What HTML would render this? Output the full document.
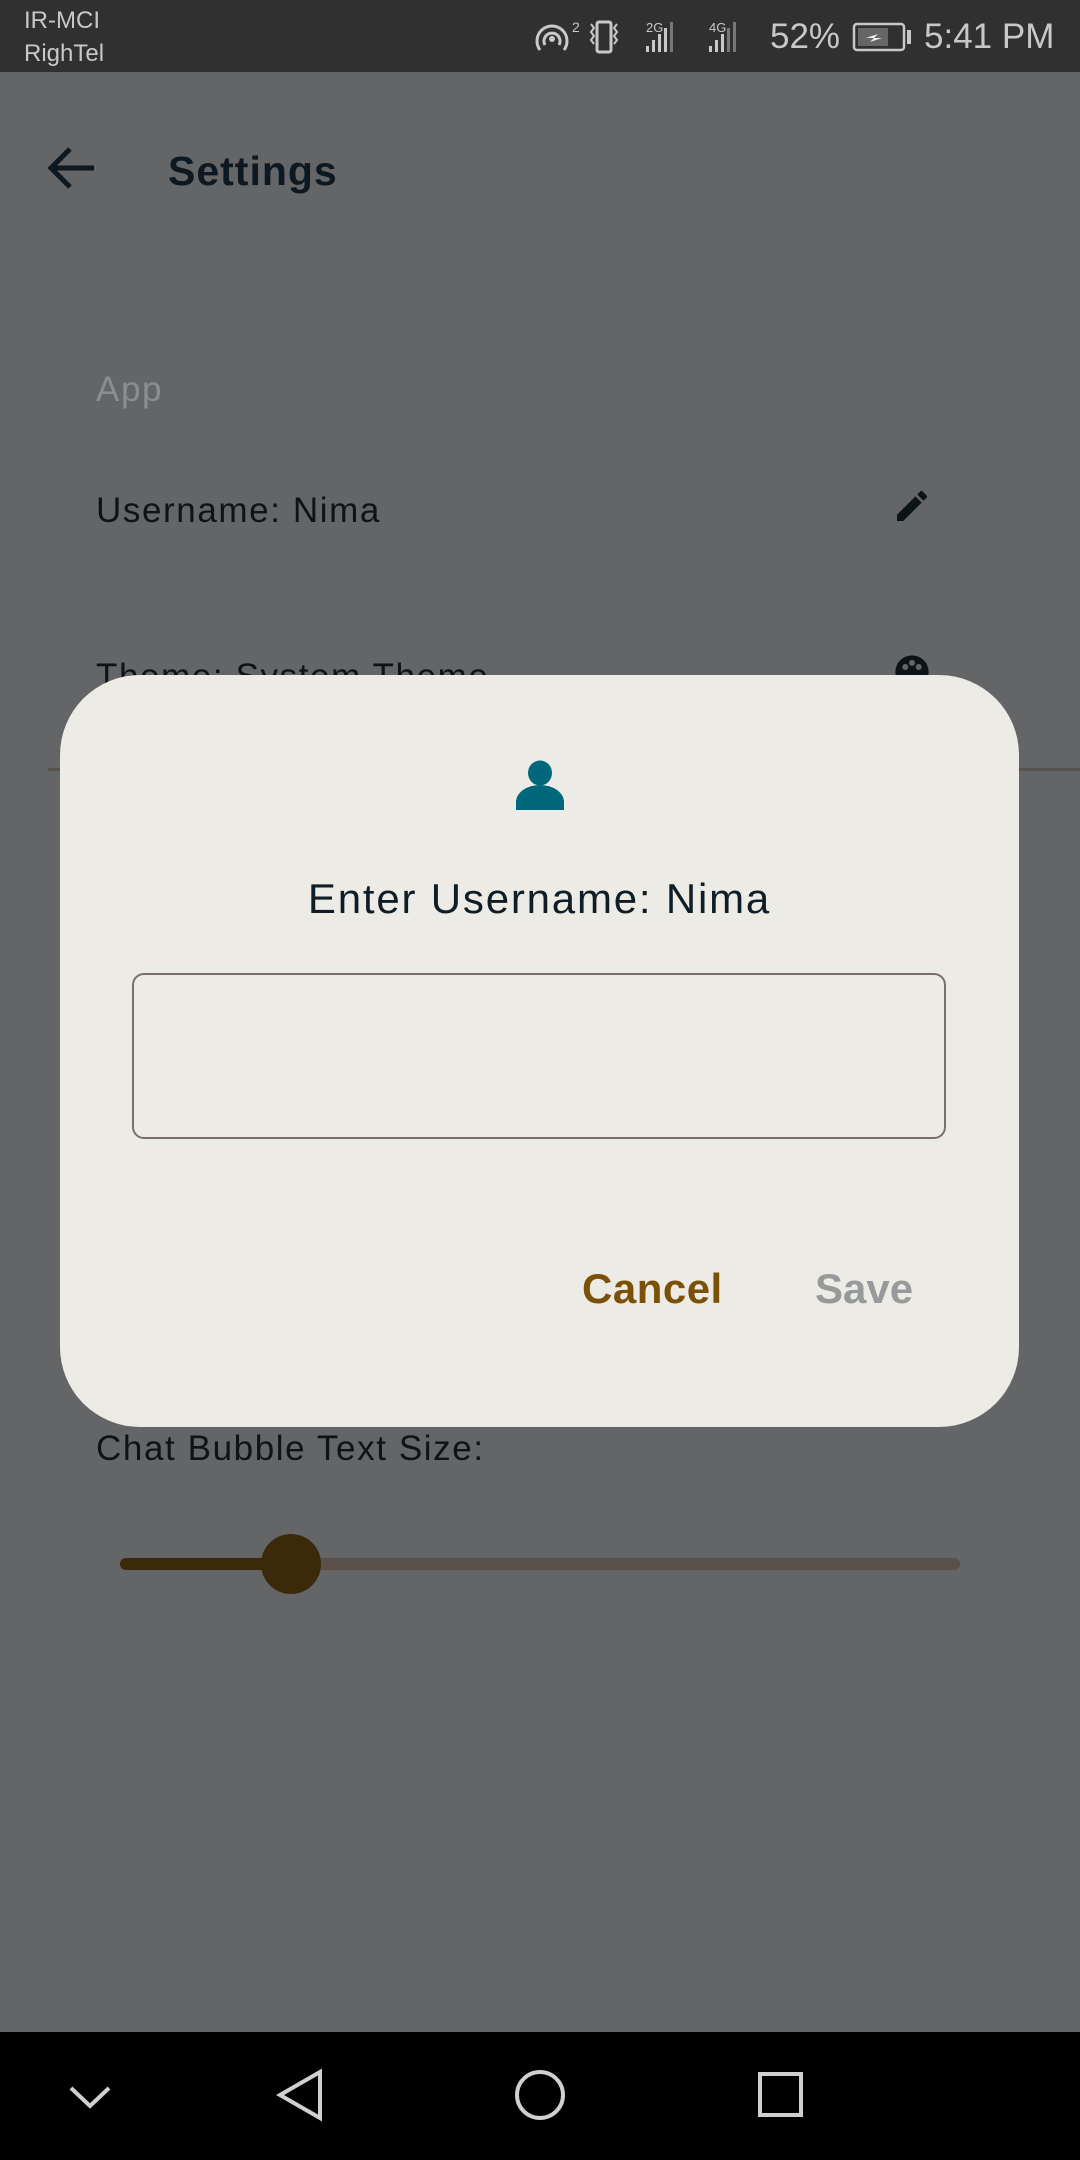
<!DOCTYPE html>
<html style="width:1080px;height:2160px;overflow:hidden"><head><meta charset="utf-8"><style>
*{margin:0;padding:0;box-sizing:border-box}
body{width:1080px;height:2160px;background:#646567;font-family:"Liberation Sans",sans-serif;position:relative;overflow:hidden}
.abs{position:absolute}
.sb{left:0;top:0;width:1080px;height:72px;background:#303030;color:#c8c8c8}
.t{white-space:nowrap;line-height:1}
.ls{letter-spacing:1.6px}
</style></head><body>
<div class="abs sb">
 <div class="abs t" style="left:24px;top:9px;font-size:24px">IR-MCI</div>
 <div class="abs t" style="left:24px;top:42px;font-size:24px">RighTel</div>
 <svg class="abs" style="left:534px;top:18px" width="380" height="40" viewBox="0 0 380 40">
  <g fill="none" stroke="#c8c8c8" stroke-width="3">
   <path d="M6 32 A15 15 0 1 1 30 32"/><path d="M11 27 A8 8 0 1 1 25 27"/>
  </g>
  <circle cx="18" cy="21" r="3" fill="#c8c8c8"/>
  <text x="38" y="14" font-size="14" fill="#c8c8c8" font-family="Liberation Sans">2</text>
  <rect x="63" y="4" width="14" height="30" rx="2" fill="none" stroke="#c8c8c8" stroke-width="3"/>
  <path d="M57 6l3 4-3 4 3 4-3 4 3 4M83 6l-3 4 3 4-3 4 3 4-3 4" stroke="#c8c8c8" stroke-width="2" fill="none"/>
  <text x="112" y="14" font-size="13" fill="#c8c8c8">2G</text>
  <rect x="112" y="28" width="3" height="6" fill="#c8c8c8"/><rect x="118" y="22" width="3" height="12" fill="#c8c8c8"/><rect x="124" y="16" width="3" height="18" fill="#c8c8c8"/><rect x="130" y="10" width="3" height="24" fill="#c8c8c8"/><rect x="136" y="4" width="3" height="30" fill="#777"/>
  <text x="175" y="14" font-size="13" fill="#c8c8c8">4G</text>
  <rect x="175" y="28" width="3" height="6" fill="#c8c8c8"/><rect x="181" y="22" width="3" height="12" fill="#c8c8c8"/><rect x="187" y="16" width="3" height="18" fill="#c8c8c8"/><rect x="193" y="10" width="3" height="24" fill="#777"/><rect x="199" y="4" width="3" height="30" fill="#777"/>
  <rect x="320" y="6" width="50" height="26" rx="3" fill="none" stroke="#c8c8c8" stroke-width="2.5"/>
  <rect x="324" y="10" width="30" height="18" fill="#666"/>
  <rect x="373" y="12" width="4" height="14" fill="#c8c8c8"/>
  <path d="M332 20l12-4-4 4h8l-12 4 4-4z" fill="#eee"/>
 </svg>
 <div class="abs t" style="left:770px;top:19px;font-size:35px">52%</div>
 <div class="abs t" style="left:924px;top:19px;font-size:35px">5:41 PM</div>
</div>

<svg class="abs" style="left:46px;top:146px" width="50" height="44" viewBox="0 0 50 44"><path d="M48 22H5M24 3L5 22l19 19" stroke="#0d1820" stroke-width="5" fill="none"/></svg>
<div class="abs t" style="left:168px;top:151px;font-size:41px;font-weight:bold;color:#0d1820;letter-spacing:1px">Settings</div>

<div class="abs t ls" style="left:96px;top:372px;font-size:35px;color:#8c8d8e">App</div>
<div class="abs t ls" style="left:96px;top:493px;font-size:35px;color:#0d1418">Username: Nima</div>
<svg class="abs" style="left:892px;top:486px" width="40" height="40" viewBox="0 0 24 24"><path d="M3 17.25V21h3.75L17.8 9.94l-3.75-3.75L3 17.25zM20.7 7.04a1 1 0 000-1.41l-2.34-2.34a1 1 0 00-1.41 0l-1.83 1.83 3.75 3.75 1.83-1.83z" fill="#0d1418"/></svg>
<div class="abs t ls" style="left:96px;top:659px;font-size:35px;color:#0d1418">Theme: System Theme</div>
<svg class="abs" style="left:892px;top:652px" width="40" height="40" viewBox="0 0 24 24"><circle cx="12" cy="12" r="10" fill="#0d1418"/><circle cx="8" cy="9" r="1.8" fill="#646567"/><circle cx="12" cy="6.5" r="1.8" fill="#646567"/><circle cx="16" cy="9" r="1.8" fill="#646567"/></svg>
<div class="abs" style="left:48px;top:768px;width:1032px;height:3px;background:#58534e"></div>

<div class="abs t ls" style="left:96px;top:1431px;font-size:35px;color:#0d1418">Chat Bubble Text Size:</div>
<div class="abs" style="left:120px;top:1558px;width:840px;height:12px;border-radius:6px;background:#5a5048"></div>
<div class="abs" style="left:120px;top:1558px;width:172px;height:12px;border-radius:6px;background:#3a2a0a"></div>
<div class="abs" style="left:261px;top:1534px;width:60px;height:60px;border-radius:50%;background:#3a2a0a"></div>

<div class="abs" style="left:60px;top:675px;width:959px;height:752px;background:#edebe5;border-radius:80px">
 <svg class="abs" style="left:455px;top:85px" width="50" height="50" viewBox="0 0 50 50"><ellipse cx="25" cy="13" rx="12" ry="12.5" fill="#00687a"/><path d="M1 50V42A24 17 0 0 1 49 42V50z" fill="#00687a"/></svg>
 <div class="abs t" style="left:0;width:959px;text-align:center;top:203px;font-size:42px;color:#0f1d26;letter-spacing:1.8px">Enter Username: Nima</div>
 <div class="abs" style="left:72px;top:298px;width:814px;height:166px;border:2.5px solid #7a7068;border-radius:12px"></div>
 <div class="abs t" style="left:522px;top:593px;font-size:42px;font-weight:bold;color:#7a5106;letter-spacing:0.5px">Cancel</div>
 <div class="abs t" style="left:755px;top:593px;font-size:42px;font-weight:bold;color:#979a9a">Save</div>
</div>

<div class="abs" style="left:0;top:2032px;width:1080px;height:128px;background:#000">
 <svg width="1080" height="128" viewBox="0 0 1080 128"><g fill="none" stroke="#d0d0d0" stroke-width="4">
  <path d="M71 56l19 18 19-18"/>
  <path d="M320 40L280 63l40 23z"/>
  <circle cx="540" cy="63" r="23"/>
  <rect x="760" y="42" width="41" height="41"/>
 </g></svg>
</div>
</body></html>
